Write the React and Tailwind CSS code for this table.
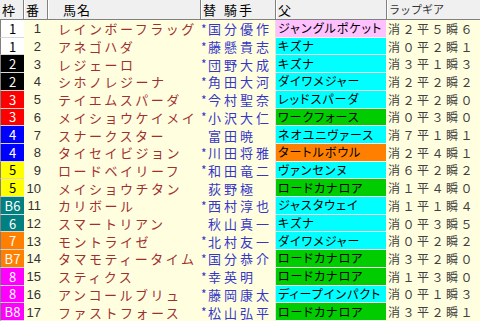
const rows = [
  ['1', 'bg-white text-black', '1', 'レインボーフラッグ', true, '国分優作', 'ジャングルポケット', 'bg-[#ffc0ff]', '消２平５瞬６'],
  ['1', 'bg-white text-black', '2', 'アネゴハダ', true, '藤懸貴志', 'キズナ', 'bg-[#00ffff]', '消０平２瞬１'],
  ['2', 'bg-black text-white', '3', 'レジェーロ', true, '団野大成', 'キズナ', 'bg-[#00ffff]', '消３平１瞬３'],
  ['2', 'bg-black text-white', '4', 'シホノレジーナ', true, '角田大河', 'ダイワメジャー', 'bg-[#00ffff]', '消２平２瞬２'],
  ['3', 'bg-[#ff0000] text-white', '5', 'テイエムスパーダ', true, '今村聖奈', 'レッドスパーダ', 'bg-[#00ffff]', '消２平２瞬０'],
  ['3', 'bg-[#ff0000] text-white', '6', 'メイショウケイメイ', true, '小沢大仁', 'ワークフォース', 'bg-[#00cc00]', '消０平３瞬０'],
  ['4', 'bg-[#0000ff] text-white', '7', 'スナークスター', false, '富田暁', 'ネオユニヴァース', 'bg-[#00ffff]', '消７平１瞬１'],
  ['4', 'bg-[#0000ff] text-white', '8', 'タイセイビジョン', true, '川田将雅', 'タートルボウル', 'bg-[#ff8000]', '消２平４瞬１'],
  ['5', 'bg-[#ffff00] text-black', '9', 'ロードベイリーフ', true, '和田竜二', 'ヴァンセンヌ', 'bg-[#00ffff]', '消６平２瞬２'],
  ['5', 'bg-[#ffff00] text-black', '10', 'メイショウチタン', false, '荻野極', 'ロードカナロア', 'bg-[#00cc00]', '消１平４瞬０'],
  ['B6', 'bg-[#008080] text-white', '11', 'カリボール', true, '西村淳也', 'ジャスタウェイ', 'bg-[#00ffff]', '消１平１瞬４'],
  ['6', 'bg-[#008080] text-white', '12', 'スマートリアン', false, '秋山真一', 'キズナ', 'bg-[#00ffff]', '消０平３瞬５'],
  ['7', 'bg-[#ff8000] text-white', '13', 'モントライゼ', true, '北村友一', 'ダイワメジャー', 'bg-[#00ffff]', '消０平２瞬２'],
  ['B7', 'bg-[#ff8000] text-white', '14', 'タマモティータイム', true, '国分恭介', 'ロードカナロア', 'bg-[#00cc00]', '消３平２瞬０'],
  ['8', 'bg-[#ff00ff] text-white', '15', 'スティクス', true, '幸英明', 'ロードカナロア', 'bg-[#00cc00]', '消１平３瞬０'],
  ['8', 'bg-[#ff00ff] text-white', '16', 'アンコールブリュ', true, '藤岡康太', 'ディープインパクト', 'bg-[#00ffff]', '消０平１瞬３'],
  ['B8', 'bg-[#ff00ff] text-white', '17', 'ファストフォース', true, '松山弘平', 'ロードカナロア', 'bg-[#00cc00]', '消３平２瞬１'],
];

const hsep = 'border-l border-[#808080] shadow-[inset_1px_0_0_#ffffff]';

export default function App() {
  return (
    <div className="w-[480px] h-[321px] overflow-hidden bg-[#ffffe0] flex flex-col font-['Noto_Sans_CJK_JP',sans-serif] leading-none">
      <div className="h-[20px] shrink-0 flex bg-[#f0f0f0] border-b border-[#808080] text-[13px] text-black">
        <div className="w-[23px] flex items-center pl-[2px]">枠</div>
        <div className={`w-[24px] flex items-center pl-[2px] ${hsep}`}>番</div>
        <div className={`w-[153px] flex items-center pl-[15px] tracking-[1px] ${hsep}`}>馬名</div>
        <div className={`w-[75px] flex items-center pl-[2px] ${hsep}`}>
          <span>替</span>
          <span className="ml-[8px] tracking-[2px]">騎手</span>
        </div>
        <div className={`w-[111px] flex items-center pl-[2px] ${hsep}`}>父</div>
        <div className={`flex-1 flex items-center pl-[2px] text-[11px] text-[#333] ${hsep}`}>ラップギア</div>
      </div>
      <div className="flex-1 flex flex-col min-h-0">
        {rows.map((r, i) => (
          <div key={i} className="flex-1 min-h-0 flex items-stretch overflow-hidden">
            <div className={`w-[24px] shrink-0 flex items-center justify-center border-l border-[#808080] border-b border-b-[#d8d8d8] text-[13px] ${r[1]}`}>
              {r[0]}
            </div>
            <div className="w-[23px] shrink-0 flex items-center justify-end pr-[6px] text-[13px] text-[#333] font-['Liberation_Sans',sans-serif]">
              {r[2]}
            </div>
            <div className="w-[153px] shrink-0 flex items-center pl-[11px] text-[13px] tracking-[2.5px] text-[#a03030] whitespace-nowrap overflow-hidden">
              <span>{r[3]}</span>
            </div>
            <div className="w-[75px] shrink-0 flex items-center text-[#3636c8] whitespace-nowrap overflow-hidden">
              <span className="w-[8px] shrink-0 text-[12px] pl-[1px]">{r[4] ? '*' : ''}</span>
              <span className="text-[13px] tracking-[3px]">{r[5]}</span>
            </div>
            <div className={`w-[111px] shrink-0 flex items-center pl-[2px] text-[12px] tracking-[1px] [font-feature-settings:'palt'] text-black whitespace-nowrap overflow-hidden border-l border-l-[#e0e0e0] border-b border-b-[#f0f0f0] ${r[7]}`}>
              <span>{r[6]}</span>
            </div>
            <div className="flex-1 flex items-center pl-[2px] text-[12px] tracking-[2.5px] text-[#404040] whitespace-nowrap overflow-hidden">
              <span>{r[8]}</span>
            </div>
          </div>
        ))}
      </div>
    </div>
  );
}
